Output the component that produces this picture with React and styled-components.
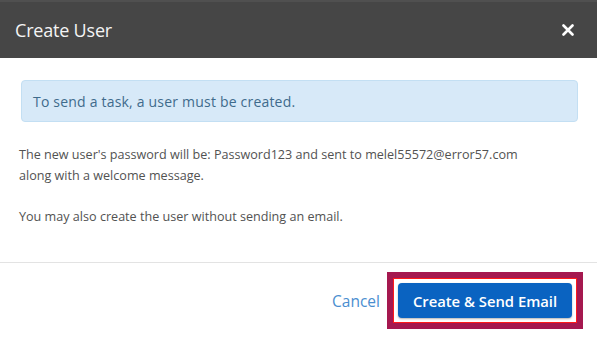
import React from "react";
import styled, { createGlobalStyle } from "styled-components";

const GlobalStyle = createGlobalStyle`
  html, body {
    margin: 0;
    padding: 0;
    background: #ffffff;
  }
  body {
    font-family: "Open Sans", "Liberation Sans", sans-serif;
  }
`;

const Modal = styled.div`
  width: 597px;
  height: 338px;
  background: #ffffff;
  display: flex;
  flex-direction: column;
  overflow: hidden;
`;

const Header = styled.div`
  height: 56px;
  background: #464646;
  border-top: 2px solid #505050;
  display: flex;
  align-items: center;
  justify-content: space-between;
  padding: 0 23px 0 15px;
`;

const Title = styled.h2`
  margin: 0;
  font-size: 18px;
  font-weight: 500;
  color: #f4f4f4;
  letter-spacing: -0.2px;
`;

const CloseButton = styled.button`
  border: none;
  background: none;
  padding: 0;
  width: 12px;
  height: 12px;
  display: flex;
  align-items: center;
  justify-content: center;
  cursor: pointer;
`;

const Body = styled.div`
  padding: 22px 19px 0 19px;
  height: 182px;
  border-bottom: 1px solid #e3e3e3;
`;

const Alert = styled.div`
  margin: 0 0 0 2px;
  height: 40px;
  display: flex;
  align-items: center;
  padding: 0 11px;
  background: #d7e9f8;
  border: 1px solid #c3dff3;
  border-radius: 4px;
  color: #3f6b8c;
  font-size: 14px;
  letter-spacing: 0.2px;
`;

const Text = styled.p`
  margin: ${({ first }) => (first ? "22px" : "20px")} 0 0 0;
  max-width: 510px;
  font-size: 12.6px;
  line-height: 21px;
  color: #525252;
`;

const Footer = styled.div`
  flex: 1;
  display: flex;
  align-items: center;
  justify-content: flex-end;
  padding: 0 14px 0 0;
`;

const CancelLink = styled.button`
  border: none;
  background: none;
  padding: 0;
  margin-right: 7px;
  font-family: inherit;
  font-size: 15.5px;
  color: #4a8ed0;
  cursor: pointer;
`;

const Highlight = styled.div`
  border: 6px solid #a5184f;
  box-shadow: inset 0 0 0 1px #ff1a1a;
  padding: 5px;
  display: flex;
`;

const PrimaryButton = styled.button`
  width: 174px;
  height: 35px;
  border: none;
  border-radius: 4px;
  background: #0a63c1;
  color: #ffffff;
  font-family: inherit;
  font-size: 14.8px;
  font-weight: 600;
  box-shadow: 0 1px 2px rgba(0, 0, 0, 0.3);
  cursor: pointer;
`;

const App = () => {
  return (
    <>
      <GlobalStyle />
      <Modal>
        <Header>
          <Title>Create User</Title>
          <CloseButton aria-label="Close">
            <svg width="12" height="12" viewBox="0 0 12 12">
              <path
                d="M1.5 1.5 L10.5 10.5 M10.5 1.5 L1.5 10.5"
                stroke="#ffffff"
                strokeWidth="2.6"
                strokeLinecap="round"
              />
            </svg>
          </CloseButton>
        </Header>
        <Body>
          <Alert>To send a task, a user must be created.</Alert>
          <Text first>
            The new user's password will be: Password123 and sent to
            melel55572@error57.com along with a welcome message.
          </Text>
          <Text>You may also create the user without sending an email.</Text>
        </Body>
        <Footer>
          <CancelLink>Cancel</CancelLink>
          <Highlight>
            <PrimaryButton>Create &amp; Send Email</PrimaryButton>
          </Highlight>
        </Footer>
      </Modal>
    </>
  );
};

export default App;
